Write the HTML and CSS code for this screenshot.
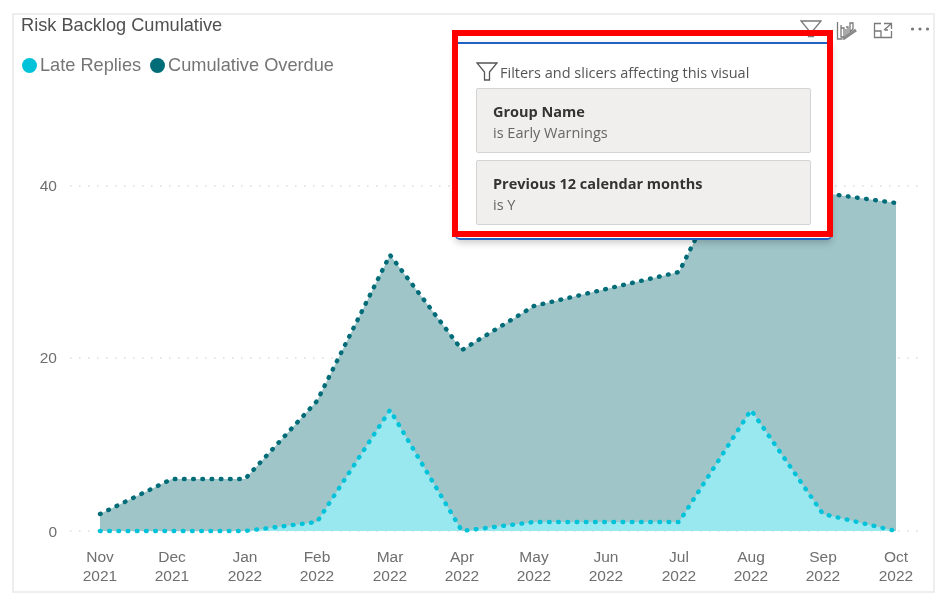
FILE: index.html
```html
<!DOCTYPE html>
<html lang="en">
<head>
<meta charset="utf-8">
<title>Risk Backlog Cumulative</title>
<link rel="stylesheet" href="styles.css">
</head>
<body>
<main class="card">
  <header class="card-head">
    <h1 class="title">Risk Backlog Cumulative</h1>
    <div class="tools">
      <svg class="tool tool-filter" viewBox="0 0 22 19"><path d="M1 1h20l-7.500 9v6.500h-5V10z"/></svg>
      <svg class="tool tool-bars" viewBox="0 0 22 20"><path d="M1.500 1v17h5M5 4v12h3V7H5M10 8v8l2-1V6h-2M15 2l-1 0v9l3-3V2z"/><path class="thick" d="M7 18l13-9"/></svg>
      <svg class="tool tool-focus" viewBox="0 0 20 17"><path d="M8 1.500H1.500v14h17V9M8 15.500V9H1.500M11 1.500h7.500V7M18 2l-7 6M12 8h3"/></svg>
      <svg class="tool tool-more" viewBox="0 0 20 6"><circle cx="2.500" cy="3" r="1.600"/><circle cx="10" cy="3" r="1.600"/><circle cx="17.500" cy="3" r="1.600"/></svg>
    </div>
  </header>
  <ul class="legend">
    <li class="legend-item"><span class="dot dot-late"></span>Late Replies</li>
    <li class="legend-item"><span class="dot dot-overdue"></span>Cumulative Overdue</li>
  </ul>
  <svg class="chart" viewBox="14 80 919 511">
    <g class="grid">
      <path d="M70 186H925"/><path d="M70 358H925"/><path d="M70 531H925"/>
    </g>
    <g class="y-labels">
      <text x="57" y="191">40</text><text x="57" y="363">20</text><text x="57" y="537">0</text>
    </g>
    <path class="area-overdue" d="M100 514L172 479L245 479L317 401L390 255L462 350L534 306L606 289L679 272L751 128L823 193L896 203V531H100Z"/>
    <path class="area-late" d="M100 531L172 531L245 531L317 522L390 410L462 531L534 522L606 522L679 522L751 410L823 514L896 531Z"/>
    <path class="line-overdue" d="M100 514L172 479L245 479L317 401L390 255L462 350L534 306L606 289L679 272L751 128L823 193L896 203"/>
    <path class="line-late" d="M100 531L172 531L245 531L317 522L390 410L462 531L534 522L606 522L679 522L751 410L823 514L896 531"/>
    <g class="x-labels">
      <text x="100" y="562">Nov</text><text x="100" y="581">2021</text>
      <text x="172" y="562">Dec</text><text x="172" y="581">2021</text>
      <text x="245" y="562">Jan</text><text x="245" y="581">2022</text>
      <text x="317" y="562">Feb</text><text x="317" y="581">2022</text>
      <text x="390" y="562">Mar</text><text x="390" y="581">2022</text>
      <text x="462" y="562">Apr</text><text x="462" y="581">2022</text>
      <text x="534" y="562">May</text><text x="534" y="581">2022</text>
      <text x="606" y="562">Jun</text><text x="606" y="581">2022</text>
      <text x="679" y="562">Jul</text><text x="679" y="581">2022</text>
      <text x="751" y="562">Aug</text><text x="751" y="581">2022</text>
      <text x="823" y="562">Sep</text><text x="823" y="581">2022</text>
      <text x="896" y="562">Oct</text><text x="896" y="581">2022</text>
    </g>
  </svg>
  <section class="popup">
    <div class="popup-head">
      <svg class="popup-icon" viewBox="0 0 22 20"><path d="M1 1h20l-7.500 9v8h-5v-8z"/></svg>
      <span>Filters and slicers affecting this visual</span>
    </div>
    <div class="filter-card">
      <strong class="filter-name">Group Name</strong>
      <span class="filter-value">is Early Warnings</span>
    </div>
    <div class="filter-card">
      <strong class="filter-name">Previous 12 calendar months</strong>
      <span class="filter-value">is Y</span>
    </div>
  </section>
  <div class="highlight"></div>
</main>
</body>
</html>
```

FILE: styles.css
```css
* {
  box-sizing: border-box;
}

html,
body {
  margin: 0;
  height: 603px;
  background: #fff;
  overflow: hidden;
}

body {
  padding: 13px 5px 10px 12px;
  font-family: "Liberation Sans", Arial, sans-serif;
  color: #666;
  filter: blur(0.5px);
}

.card {
  position: relative;
  display: flex;
  flex-direction: column;
  width: 923px;
  height: 580px;
  border: 2px solid #eeeeee;
}

.card-head {
  display: flex;
  justify-content: space-between;
  align-items: flex-start;
  padding: 0 3px 0 7px;
}

.title {
  margin: 0;
  font-size: 18.200px;
  font-weight: 400;
  line-height: 20px;
  color: #505050;
  white-space: nowrap;
}

.tools {
  display: flex;
  align-items: flex-start;
  margin-top: 5px;
  height: 19px;
}

.tool {
  display: block;
  fill: none;
  stroke: #7a7a7a;
  stroke-width: 1.300;
}

.tool-filter {
  width: 22px;
  height: 19px;
}

.tool-bars {
  width: 22px;
  height: 20px;
  margin-left: 14px;
  margin-top: 1px;
}

.tool-bars .thick {
  stroke-width: 3;
  stroke: #8a8a8a;
}

.tool-focus {
  width: 20px;
  height: 17px;
  margin-left: 15px;
  margin-top: 2px;
}

.tool-more {
  width: 20px;
  height: 6px;
  margin-left: 17px;
  margin-top: 6px;
  fill: #777;
  stroke: none;
}

.legend {
  display: flex;
  gap: 9px;
  margin: 16px 0 0;
  padding: 0 0 0 8px;
  list-style: none;
  font-size: 18.200px;
  line-height: 20px;
  color: #757575;
}

.legend-item {
  display: flex;
  align-items: center;
  gap: 3px;
}

.dot {
  width: 15px;
  height: 15px;
  border-radius: 50%;
}

.dot-late {
  background: #00c3da;
}

.dot-overdue {
  background: #006c78;
}

.chart {
  display: block;
  width: 919px;
  height: 511px;
  margin-top: 5px;
  font-size: 15.500px;
  fill: #6f6f6f;
}

.grid path {
  fill: none;
  stroke: #dddddd;
  stroke-width: 1.500;
  stroke-dasharray: 1.500 7.500;
}

.y-labels text {
  text-anchor: end;
}

.x-labels text {
  text-anchor: middle;
}

.area-overdue {
  fill: #9fc5c9;
}

.area-late {
  fill: #99e7ef;
}

.line-overdue,
.line-late {
  fill: none;
  stroke-width: 4.400;
  stroke-linecap: round;
  stroke-linejoin: round;
  stroke-dasharray: 0.700 8.500;
}

.line-overdue {
  stroke: #006c78;
}

.line-late {
  stroke: #00c3da;
}

.popup {
  position: absolute;
  left: 441px;
  top: 27px;
  width: 377px;
  height: 198px;
  padding: 17px 21px 0 21px;
  background: #fff;
  border-top: 2px solid #1f62c4;
  border-bottom: 2px solid #1f62c4;
  border-radius: 0 0 5px 5px;
  box-shadow: 0 3px 7px rgba(0, 0, 0, 0.2);
  font-family: "Open Sans", "Noto Sans", sans-serif;
  font-size: 14.500px;
}

.popup-head {
  display: flex;
  align-items: center;
  gap: 2px;
  height: 22px;
  margin-bottom: 5px;
  color: #555;
}

.popup-icon {
  width: 22px;
  height: 20px;
  fill: none;
  stroke: #555;
  stroke-width: 1.300;
}

.filter-card {
  display: flex;
  flex-direction: column;
  justify-content: center;
  gap: 3px;
  width: 335px;
  height: 65px;
  margin-bottom: 7px;
  padding: 3px 16px 0;
  background: #f0efee;
  border: 1px solid #d4d4d4;
  border-radius: 2px;
  line-height: 18px;
}

.filter-name {
  font-weight: 700;
  color: #333;
}

.filter-value {
  color: #666;
}

.highlight {
  position: absolute;
  left: 438px;
  top: 15px;
  width: 381px;
  height: 207px;
  border: 6px solid #ff0000;
}
```
